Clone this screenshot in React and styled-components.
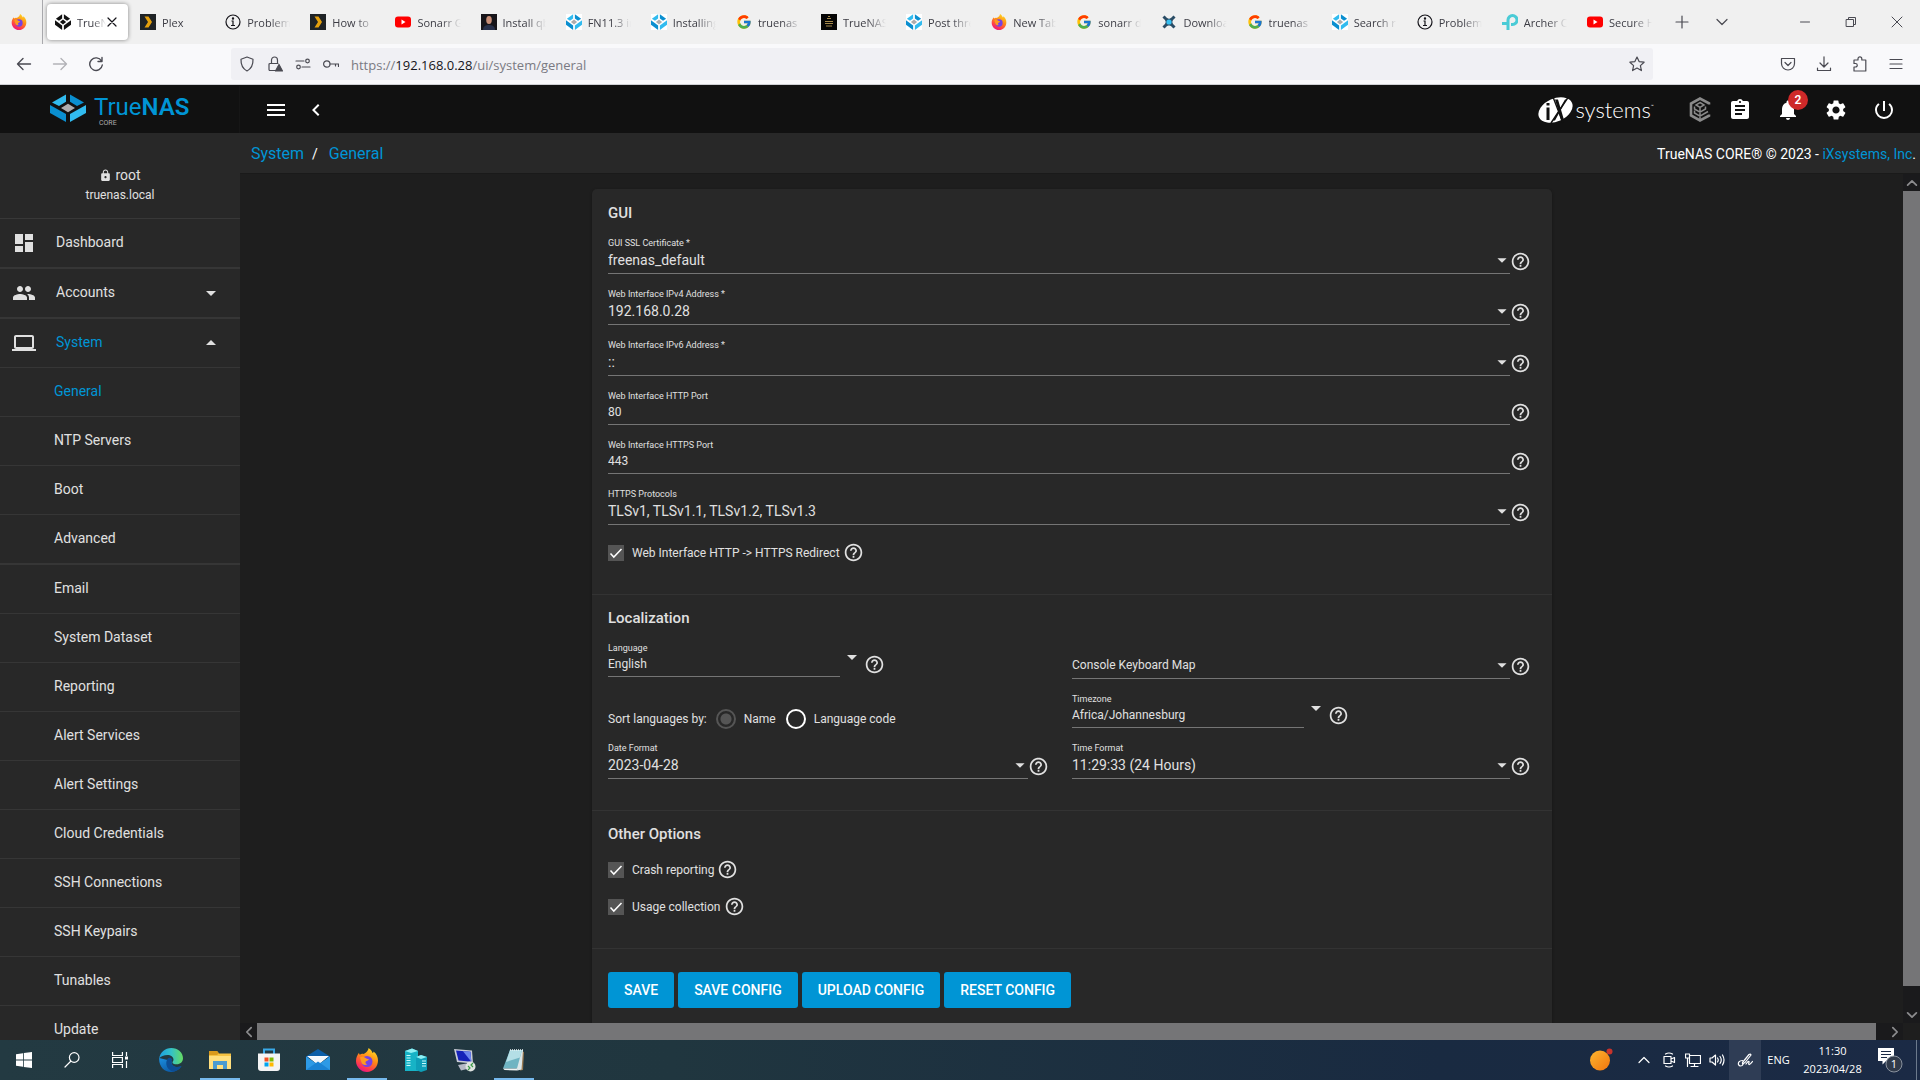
import { useState } from 'react';
import styled, { createGlobalStyle } from 'styled-components';
import {
  MdArrowDropDown,
  MdArrowDropUp,
  MdAssignment,
  MdChevronLeft,
  MdDashboard,
  MdHelpOutline,
  MdLaptop,
  MdLock,
  MdMenu,
  MdNotifications,
  MdPeople,
  MdPowerSettingsNew,
  MdSettings,
} from 'react-icons/md';
import { FcGoogle } from 'react-icons/fc';

const GlobalStyle = createGlobalStyle`
  * {
    box-sizing: border-box;
  }

  body {
    margin: 0;
    background: #1e1e1e;
    font-family: Roboto, "Liberation Sans", sans-serif;
    overflow: hidden;
  }

  button, input, select {
    font-family: inherit;
    margin: 0;
  }
`

const Desktop = styled.div`
  display: flex;
  flex-direction: column;
  height: 100vh;
`

/* ---------- browser ---------- */

const TabStrip = styled.div`
  display: flex;
  flex: none;
  height: 44px;
  background: #f0f0f0;
  font-family: "Open Sans", "Noto Sans", sans-serif;
`

const PinnedTab = styled.button`
  display: flex;
  align-items: center;
  justify-content: center;
  width: 43px;
  padding: 0 4px 0 0;
  border: 0;
  border-right: 1px solid #a9a9ad;
  background: none;
`

const TabList = styled.div`
  display: flex;
  flex: 0 1 1619px;
  min-width: 0;
  padding: 4px 0 4px 2px;
`

const Tab = styled.div`
  display: flex;
  flex: 1 1 0;
  min-width: 0;
  align-items: center;
  gap: 6px;
  margin: 0 2px;
  padding: 0 8px;
  border-radius: 4px;
  background: ${(props) => (props.$active ? '#fff' : 'none')};
  box-shadow: ${(props) => (props.$active ? '0 0 4px rgba(0, 0, 0, 0.45)' : 'none')};

  > svg {
    flex: none;
  }
`

const TabTitle = styled.span`
  flex: 1;
  min-width: 0;
  padding-top: 2px;
  overflow: hidden;
  white-space: nowrap;
  font-size: 11px;
  line-height: 16px;
  color: #3c3c44;
  mask-image: linear-gradient(to right, #000 55%, transparent 100%);
`

const TabClose = styled.button`
  display: flex;
  flex: none;
  padding: 0;
  margin-left: -8px;
  border: 0;
  background: none;
`

const StripButton = styled.button`
  display: flex;
  align-items: center;
  justify-content: center;
  width: ${(props) => props.$width || 40}px;
  padding: 0;
  border: 0;
  background: none;
`

const WindowControls = styled.div`
  display: flex;
  margin-left: auto;
`

const NavBar = styled.div`
  display: flex;
  flex: none;
  align-items: center;
  height: 41px;
  padding: 0 6px;
  background: #f9f9fb;
  border-bottom: 1px solid #cfd0d4;
`

const NavButton = styled.button`
  display: flex;
  align-items: center;
  justify-content: center;
  width: 36px;
  height: 32px;
  padding: 0;
  border: 0;
  background: none;
  opacity: ${(props) => (props.disabled ? 0.4 : 1)};
`

const UrlBar = styled.label`
  display: flex;
  flex: 1;
  align-items: center;
  gap: 12px;
  height: 32px;
  margin-left: 117px;
  margin-right: 117px;
  padding: 0 8px;
  border-radius: 3px;
  background: #f0f0f4;
`

const UrlText = styled.a`
  flex: 1;
  padding-top: 2px;
  font-family: "Open Sans", "Noto Sans", sans-serif;
  font-size: 13px;
  line-height: 20px;
  color: #7a7a82;
  text-decoration: none;

  b {
    font-weight: 400;
    color: #15141a;
  }
`

/* ---------- TrueNAS shell ---------- */

const AppShell = styled.div`
  display: flex;
  flex-direction: column;
  flex: 1;
  min-height: 0;
  color: #e0e0e0;
`

const Header = styled.header`
  display: flex;
  flex: none;
  align-items: center;
  height: 48px;
  padding-top: 1px;
  background: #111;
`

const Brand = styled.a`
  display: flex;
  width: 240px;
  height: 47px;
  padding: 8px 0 0 50px;
  gap: 8px;
  border-right: 1px solid #161616;
  text-decoration: none;
`

const BrandName = styled.span`
  display: flex;
  flex-direction: column;
  font-size: 24px;
  line-height: 26px;
  color: #0095d5;

  b {
    font-weight: 600;
  }
`

const BrandEdition = styled.span`
  padding-left: 5px;
  font-size: 7px;
  line-height: 6px;
  color: #aeadae;
`

const HeaderButton = styled.button`
  position: relative;
  display: flex;
  align-items: center;
  justify-content: center;
  width: ${(props) => props.$width || 48}px;
  height: 48px;
  padding: 0;
  border: 0;
  background: none;
  color: #fff;
  font-size: 24px;
`

const HeaderLeft = styled.div`
  display: flex;
  margin-left: 12px;
`

const HeaderRight = styled.div`
  display: flex;
  align-items: center;
  margin-left: auto;
  padding-right: 4px;
`

const Badge = styled.span`
  position: absolute;
  top: 4px;
  right: 12px;
  width: 20px;
  height: 20px;
  border-radius: 50%;
  background: #ce2929;
  font-size: 12px;
  font-weight: 600;
  line-height: 20px;
  text-align: center;
`

const IxLogo = styled.a`
  display: flex;
  align-items: center;
  margin-right: 22px;
  color: #fff;
  text-decoration: none;
`

const IxName = styled.span`
  font-family: Lato, sans-serif;
  font-size: 22px;
  font-weight: 300;
  line-height: 28px;
  padding-left: 2px;
`

const IxMark = styled.sup`
  align-self: flex-start;
  font-size: 5px;
  line-height: 20px;
`

const Body = styled.div`
  display: flex;
  flex: 1;
  min-height: 0;
`

const Sidebar = styled.nav`
  flex: none;
  width: 240px;
  overflow: hidden;
  background: #282828;
`

const Profile = styled.div`
  display: flex;
  flex-direction: column;
  align-items: center;
  height: 86px;
  padding-top: 32px;
  border-bottom: 1px solid #383838;
`

const ProfileName = styled.span`
  display: flex;
  align-items: center;
  gap: 3px;
  font-size: 14px;
  line-height: 20px;

  svg {
    font-size: 13px;
  }
`

const ProfileHost = styled.span`
  font-size: 12px;
  line-height: 20px;
`

const MenuList = styled.ul`
  margin: 0;
  padding: 0;
  list-style: none;
`

const MenuRow = styled.li`
  border-bottom: ${(props) => (props.$thick ? 2 : 1)}px solid #363636;
`

const MenuLink = styled.a`
  display: flex;
  align-items: center;
  height: 48px;
  padding: ${(props) => (props.$sub ? '0 16px 0 54px' : '0 17px 0 12px')};
  font-size: 14px;
  line-height: 20px;
  color: ${(props) => (props.$active ? '#0095d5' : '#e0e0e0')};
  text-decoration: none;

  svg {
    flex: none;
    font-size: 24px;
    color: #e0e0e0;
  }
`

const MenuText = styled.span`
  flex: 1;
  padding-left: ${(props) => (props.$sub ? 0 : 20)}px;
  padding-bottom: 2px;
`

const Main = styled.div`
  display: flex;
  flex-direction: column;
  flex: 1;
  min-width: 0;
`

const Breadcrumb = styled.div`
  display: flex;
  flex: none;
  align-items: center;
  height: 40px;
  padding: 2px 4px 0 11px;
  background: #282828;
  font-size: 16px;
  line-height: 24px;
  color: #fff;

  a {
    color: #0095d5;
    text-decoration: none;
  }
`

const Slash = styled.span`
  padding: 0 11px 0 8px;
  font-size: 14px;
`

const Copyright = styled.span`
  margin-left: auto;
  font-size: 14px;
`

const ScrollArea = styled.div`
  display: grid;
  flex: 1;
  min-height: 0;
  grid-template-columns: 1fr 17px;
  grid-template-rows: 1fr 17px;
  border-top: 1px solid #1a1a1a;
`

const Page = styled.main`
  min-width: 0;
  min-height: 0;
  overflow: hidden;
  padding: 15px 16px 0 17px;
`

const ScrollBar = styled.div`
  display: flex;
  flex-direction: ${(props) => (props.$vertical ? 'column' : 'row')};
  background: #1a1a1c;
`

const ScrollArrow = styled.button`
  display: flex;
  flex: none;
  align-items: center;
  justify-content: center;
  width: 17px;
  height: 17px;
  padding: 0;
  border: 0;
  background: none;
`

const ScrollTrack = styled.div`
  display: flex;
  flex: 1;
  flex-direction: inherit;
`

const ScrollThumb = styled.div`
  flex: 0 0 ${(props) => props.$size}%;
  background: #757577;
`

const Card = styled.form`
  max-width: 960px;
  margin: 0 auto;
  padding-top: 1px;
  border-radius: 5px;
  background: #282828;
  box-shadow: 0 1px 3px rgba(0, 0, 0, 0.3);
`

const Section = styled.section`
  padding: 15px 16px 29px;
  border-bottom: 1px solid #333;
`

const SectionTitle = styled.h3`
  margin: 0;
  font-size: 15px;
  font-weight: 500;
  line-height: 16px;
`

const FieldList = styled.div`
  display: flex;
  flex-direction: column;
  gap: 14px;
  padding-right: ${(props) => props.$inset || 5}px;
`

const Fields = styled(FieldList)`
  margin-top: 16px;
`

const LocalizationGrid = styled.div`
  display: grid;
  grid-template-columns: 1fr 1fr;
  margin: 16px 0 2px;
`

const FieldRow = styled.div`
  display: flex;
  align-items: flex-end;
`

const FieldBox = styled.div`
  display: flex;
  flex-direction: column;
  flex: ${(props) => (props.$fixed ? '0 0 232px' : '1')};
  min-width: 0;
  border-bottom: 1px solid #757575;
`

const FieldLabel = styled.label`
  height: 12px;
  font-size: 9px;
  line-height: 12px;
`

const SelectBox = styled.div`
  display: grid;
  align-items: center;
  height: 24px;

  select, svg {
    grid-area: 1 / 1;
  }

  svg {
    justify-self: end;
    align-self: start;
    pointer-events: none;
    font-size: 22px;
    margin-right: -3px;
  }
`

const Select = styled.select`
  width: 100%;
  height: 24px;
  padding: 0 0 2px;
  border: 0;
  background: none;
  appearance: none;
  color: #e0e0e0;
  font-size: ${(props) => (props.$small ? 12 : 14)}px;
  line-height: 20px;
  outline: none;
`

const Input = styled.input`
  width: 100%;
  height: 22px;
  padding: 0 0 2px;
  border: 0;
  background: none;
  color: #e0e0e0;
  font-size: 12px;
  line-height: 18px;
  outline: none;
`

const HelpButton = styled.button`
  display: flex;
  flex: none;
  padding: 0 0 2px;
  border: 0;
  background: none;
  color: #e0e0e0;
  font-size: 21px;
`

const DropButton = styled(HelpButton)`
  align-self: flex-start;
  padding-top: 3px;
  font-size: 24px;
`

const CheckList = styled.div`
  display: flex;
  flex-direction: column;
  gap: 13px;
  margin-top: 16px;
`

const CheckRow = styled.div`
  display: flex;
  align-items: center;
  height: 24px;
`

const CheckLabel = styled.label`
  display: flex;
  align-items: center;
  gap: 8px;
  padding-right: 3px;
  font-size: 12px;
  line-height: 18px;
`

const CheckBox = styled.input`
  width: 16px;
  height: 16px;
  appearance: none;
  background-color: #555;

  &:checked {
    background-image: url("data:image/svg+xml,%3Csvg xmlns='http://www.w3.org/2000/svg' viewBox='0 0 16 16'%3E%3Cpath d='M2.5 8.5l3.3 3.6L13.5 4' fill='none' stroke='%23fff' stroke-width='1.5'/%3E%3C/svg%3E");
  }
`

const SortRow = styled.div`
  display: flex;
  align-items: center;
  height: 28px;
  margin-top: 14px;
  margin-bottom: -5px;
  font-size: 12px;
  line-height: 18px;
`

const SortCaption = styled.span`
  padding-right: 9px;
`

const RadioLabel = styled.label`
  display: flex;
  align-items: center;
  gap: 8px;
  padding-right: 10px;
`

const Radio = styled.input`
  width: 20px;
  height: 20px;
  border: 2px solid #fff;
  border-radius: 50%;
  appearance: none;

  &:checked {
    border-color: #555;
    background: radial-gradient(circle, #555 5px, transparent 6px);
  }
`

const Actions = styled.div`
  display: flex;
  gap: 4px;
  padding: 23px 16px 24px;
`

const ActionButton = styled.button`
  height: 36px;
  padding: 0 16px;
  border: 0;
  border-radius: 3px;
  background: #0095d5;
  color: #fff;
  font-size: 14px;
  font-weight: 500;
  line-height: 36px;
  text-transform: uppercase;
`

/* ---------- taskbar ---------- */

const TaskBar = styled.footer`
  display: flex;
  flex: none;
  height: 40px;
  background: linear-gradient(to right, #233a42, #20363f 35%, #192a41 75%, #1b2a45);
  color: #fff;
  font-family: "Open Sans", "Noto Sans", sans-serif;
`

const TaskGroup = styled.div`
  display: flex;
  padding-right: 2px;
`

const TaskButton = styled.button`
  display: flex;
  align-items: center;
  justify-content: center;
  width: ${(props) => props.$width || 49}px;
  padding: 0;
  border: 0;
  background: ${(props) => (props.$lit ? '#2f3d55' : 'none')};
  color: #fff;
`

const OpenTask = styled(TaskButton)`
  background: linear-gradient(to right, #76b9ed 40px, transparent 0) 5px 38px / 40px 2px no-repeat;
`

const Tray = styled.div`
  display: flex;
  margin-left: auto;
  padding-right: 3px;
`

const TrayText = styled.span`
  display: flex;
  flex-direction: column;
  align-items: center;
  justify-content: center;
  width: ${(props) => props.$width}px;
  font-size: 11px;
  line-height: 18px;
  white-space: nowrap;
`

const ShowDesktop = styled.span`
  width: 1px;
  margin-left: 6px;
  background: #6c7a8c;
`

/* ---------- drawings ---------- */

const TrueNasMark = ({ width = 36, height = 28, mono, boxed }) => {
  const light = mono ? '#111' : '#31bbef';
  const dark = mono ? '#111' : '#0a8fd0';

  return (
    <svg width={width} height={height} viewBox="0 0 36 28" preserveAspectRatio={mono || boxed ? 'none' : undefined}>
      {boxed && <rect width="36" height="28" fill="#fff" />}
      <path d="M2 8.5L16 .5v7.3L9 12z" fill={light} />
      <path d="M20 .5l14 8L27 12l-7-4.2z" fill={dark} />
      <path d="M0 11l16 9v8L0 19z" fill={dark} />
      <path d="M36 11l-16 9v8l16-9z" fill={light} />
      <path d="M18 9.8l7 4.2-7 4.2-7-4.2z" fill={mono ? '#111' : '#aeadae'} />
    </svg>
  )
}

const FirefoxIcon = ({ size = 16 }) => (
  <svg width={size} height={size} viewBox="0 0 24 24">
    <defs>
      <linearGradient id="ff-body" x1="0.8" y1="0" x2="0.3" y2="1">
        <stop offset="0" stopColor="#ffe226" />
        <stop offset="0.45" stopColor="#ff8a16" />
        <stop offset="0.8" stopColor="#ff3750" />
        <stop offset="1" stopColor="#e31587" />
      </linearGradient>
    </defs>
    <path
      d="M13.5 0c2.6 1.6 3.6 3.5 4 5 .9-.2 1-1 1-1.6C21.5 5.6 23 9 23 12.6 23 19 18 24 12 24S1 19 1 13c0-3.400 1.300-6 3-8.200.1 1 .4 1.700.8 2C6 5.600 7.500 5.500 8.800 6 10.600 4.800 13.300 3.200 13.500 0z"
      fill="url(#ff-body)"
    />
    <circle cx="12" cy="13.500" r="5.500" fill="#7542e5" />
    <path d="M5 9.500c2-1.500 4.500-.5 6 .7 1 .8 2.600.6 2.800 1.200-.5 1.400-2.600 1.200-3.300 2.700-.3 1 .5 2 1.800 2.200-2.400 1.500-5.500.2-6-2.400z" fill="#ff9a1f" />
  </svg>
)

const PlexIcon = () => (
  <svg width="16" height="16" viewBox="0 0 16 16">
    <rect width="16" height="16" fill="#1f2326" />
    <path d="M4.500 2.500h4L12 8l-3.500 5.500h-4L8 8z" fill="#e5a00d" />
  </svg>
)

const InfoIcon = () => (
  <svg width="16" height="16" viewBox="0 0 16 16" fill="none" stroke="#15141a" strokeWidth="1.200">
    <circle cx="8" cy="8" r="7" />
    <path d="M6.500 7H8v4.500M6 11.500h4" />
    <circle cx="8" cy="4.500" r=".6" fill="#15141a" />
  </svg>
)

const YoutubeIcon = () => (
  <svg width="16" height="16" viewBox="0 0 16 16">
    <rect y="2.500" width="16" height="11" rx="3" fill="#f00" />
    <path d="M6.500 5.500L10.500 8l-4 2.500z" fill="#fff" />
  </svg>
)

const PortraitIcon = () => (
  <svg width="16" height="16" viewBox="0 0 16 16">
    <rect width="16" height="16" fill="#17151a" />
    <ellipse cx="8" cy="6" rx="2.800" ry="4" fill="#c98f78" />
    <path d="M2 16c0-4 3-5 6-5s6 1 6 5z" fill="#28304a" />
  </svg>
)

const DigiIcon = () => (
  <svg width="16" height="16" viewBox="0 0 16 16">
    <rect width="16" height="16" fill="#050505" />
    <path d="M7 2.500h2M6 4.500h4M4 7.500h8M4 9.500h8M5 12h6" stroke="#a68a4c" strokeWidth="1" />
  </svg>
)

const SonarrIcon = () => (
  <svg width="16" height="16" viewBox="0 0 16 16">
    <path d="M2.500 2.500l11 11M13.500 2.500l-11 11" stroke="#2b4d66" strokeWidth="3" />
    <path d="M3.500 3.500c3 1.500 6 1.500 9 0-1.500 3-1.500 6 0 9-3-1.500-6-1.500-9 0 1.500-3 1.500-6 0-9z" fill="#2b4d66" />
    <circle cx="8" cy="8" r="2.600" fill="#36c0f2" />
  </svg>
)

const TpLinkIcon = () => (
  <svg width="16" height="16" viewBox="0 0 16 16" fill="none" stroke="#4acbd6" strokeWidth="3">
    <path d="M0 9.500h4.500M6 16V6a4.500 4.500 0 1 1 4.500 4.500H9" />
  </svg>
)

/* thin outline glyphs of the browser and tray, all on a 16px grid */
const Outline = ({ d, size = 16, color = '#4a4a52', width = 1.2, children }) => (
  <svg
    width={size}
    height={size}
    viewBox="0 0 16 16"
    fill="none"
    stroke={color}
    strokeWidth={width}
    strokeLinecap="round"
    strokeLinejoin="round"
  >
    <path d={d} />
    {children}
  </svg>
)

const TrueCommandIcon = () => (
  <svg width="22" height="25" viewBox="0 0 22 25" fill="none" stroke="#8a8a8a">
    <path d="M20 7.500V6.300L11 1.500 2 6.500v12l9 5 9-4.800v-1.200" strokeWidth="2.600" />
    <path d="M11 5.500l4 2.400-4 2.400-4-2.400zM11 10v12M5.500 9.500v2.500l5.500 3.200 5.500-3.200V9.500M5.500 13.500V16l5.500 3.200 8-4.700" strokeWidth="1.500" />
  </svg>
)

const IxOval = () => (
  <svg width="35" height="28" viewBox="0 0 35 28">
    <ellipse cx="17.500" cy="14" rx="18" ry="11.500" transform="rotate(-24 17.500 14)" fill="#fff" />
    <path d="M15 1l10 26M31 0L13 27" stroke="#111" strokeWidth="1.400" />
    <path d="M17 3.500h3l6 20.500h-3zM27 3.500h1.500L17 24.500h-2z" fill="#111" />
    <path d="M8.500 11.500h3V24h-3zM8.500 7h3v2.500h-3z" fill="#111" />
  </svg>
)

const StartIcon = () => (
  <svg width="16" height="16" viewBox="0 0 16 16" fill="#fff">
    <path d="M0 2.200L7 1.200v6.400H0zM7.800 1.100L16 0v7.600H7.800zM0 8.400h7v6.400l-7-1zM7.800 8.400H16V16l-8.200-1.100z" />
  </svg>
)

const TaskViewIcon = () => (
  <svg width="16" height="16" viewBox="0 0 16 16" fill="none" stroke="#fff" strokeWidth="1.200">
    <path d="M.6 0v3.500h9.800V0M.6 16v-3.500h9.800V16M.6 5.500h9.800v5H.6zM14.500 0v4M14.500 9v7" />
    <rect x="13" y="4.500" width="3" height="3" fill="#fff" stroke="none" />
  </svg>
)

const EdgeIcon = () => (
  <svg width="24" height="24" viewBox="0 0 24 24">
    <defs>
      <linearGradient id="edge-top" x1="0" y1="0.5" x2="1" y2="0.5">
        <stop offset="0" stopColor="#1c9fe0" />
        <stop offset="0.5" stopColor="#33c1c9" />
        <stop offset="1" stopColor="#66dc62" />
      </linearGradient>
      <linearGradient id="edge-low" x1="0" y1="0" x2="0.6" y2="1">
        <stop offset="0" stopColor="#1b8fe0" />
        <stop offset="1" stopColor="#0c59a4" />
      </linearGradient>
    </defs>
    <path d="M.2 10C-.4 18 5 24 12 24c4.500 0 8.500-2.500 10.500-6-2 1-4.500 1.300-6.500.7-2.500-.8-4-3-3.500-5.700z" fill="url(#edge-low)" />
    <path d="M8.500 11c-2 3-1.500 7.500 1.500 10.300 1.200 1.200 2.500 2 4 2.500 3.500-.6 6.700-2.800 8.500-5.800-2 1-4.500 1.300-6.500.7-3-1-4.500-4-2.800-7.200-1-2.500-3.700-2-4.700-.5z" fill="#0d4d94" />
    <path d="M.2 10.500C1 4.500 6 0 12.300 0 19 0 24 4.800 24 10.300c0 3.700-2.800 6-6.300 6-2.700 0-4.200-.8-4.200-1.800 0-.8 1-1.200 1-2.900 0-2.600-2.800-4.600-6-4.600C5 7 1.500 8.500.2 10.500z" fill="url(#edge-top)" />
  </svg>
)

const ExplorerIcon = () => (
  <svg width="24" height="24" viewBox="0 0 24 24">
    <path d="M1 3h8l2 2.500h12V21H1z" fill="#f5c242" />
    <path d="M1 3h8l2 2.500L9 7H1z" fill="#d99a1c" />
    <path d="M1 8h22v13H1z" fill="#ffdf7e" />
    <path d="M5 13h14v8h-4v-4H9v4H5z" fill="#4a9bd1" />
  </svg>
)

const StoreIcon = () => (
  <svg width="24" height="24" viewBox="0 0 24 24">
    <path d="M7 6V1.500h10V6" fill="none" stroke="#39a9e8" strokeWidth="2" />
    <path d="M1 5.500h22V20c0 2-1 3-3 3H4c-2 0-3-1-3-3z" fill="#f4f4f4" />
    <path d="M7.500 9.500h4v4h-4z" fill="#f25022" />
    <path d="M12.500 9.500h4v4h-4z" fill="#7fba00" />
    <path d="M7.500 14.500h4v4h-4z" fill="#00a4ef" />
    <path d="M12.500 14.500h4v4h-4z" fill="#ffb900" />
  </svg>
)

const MailIcon = () => (
  <svg width="24" height="24" viewBox="0 0 24 24">
    <path d="M0 8.500L12 1l12 7.500V10H0z" fill="#0b5ea8" />
    <path d="M1 8h22L12 17z" fill="#fff" />
    <path d="M0 8.500l12 8 12-8V22H0z" fill="#2d9ae6" />
    <path d="M2 8.500h20L12 15.500z" fill="#f2f8fd" />
    <path d="M0 22l12-8.500L24 22z" fill="#1a83d4" />
  </svg>
)

const ServersIcon = () => (
  <svg width="24" height="24" viewBox="0 0 24 24">
    <path d="M1 3l7-2.500L14 3v20H1z" fill="#17b3c6" />
    <path d="M1 3l7-2.500L14 3 7 5z" fill="#8ff0f4" />
    <path d="M12 9l5-2 6 2v13l-6 2-5-2z" fill="#0e9fb8" />
    <path d="M12 9l5-2 6 2-6 2z" fill="#8ff0f4" />
    <path d="M2.500 7.500h4M2.500 10h4M2.500 12.500h4M2.500 15h4M2.500 17.500h4M18 13h4M18 15.500h4M18 18h4" stroke="#c8fbfd" strokeWidth="1.200" />
  </svg>
)

const RemoteIcon = () => (
  <svg width="24" height="24" viewBox="0 0 24 24">
    <path d="M1 1l18 1.500 1 13L4 14z" fill="#c9ccd6" />
    <path d="M3 2.500l14.500 1.300.8 10L5.500 12.500z" fill="#1622b8" />
    <path d="M10 3.200l7.500.6.800 10z" fill="#6d86ee" />
    <path d="M5 17l8-1.500 3 5-8 2z" fill="#b5b9c6" />
    <circle cx="17.500" cy="18.500" r="5" fill="#dfe3e1" />
    <path d="M15 18l2 2-2 2M20 15l-2 2 2 2" fill="none" stroke="#3a9b46" strokeWidth="1.200" />
  </svg>
)

const NotepadIcon = () => (
  <svg width="24" height="24" viewBox="0 0 24 24">
    <path d="M19 3l3 1-1 18-3 .5z" fill="#9a7b52" />
    <path d="M8 2h13l-1.500 19.500-4 1z" fill="#dbe6e8" />
    <path d="M8 2h12l-5 18.500H1z" fill="#6fb4c2" />
    <path d="M8 2h12l-2 7.500L4 14z" fill="#b4dfe6" />
    <path d="M1 20.500h14l.5 2-13-.5z" fill="#eef3f3" />
    <path d="M8 2h13" stroke="#e9f3f4" strokeWidth="1.500" strokeDasharray="1 1" />
  </svg>
)

const WeatherIcon = () => (
  <svg width="24" height="24" viewBox="0 0 24 24">
    <defs>
      <linearGradient id="sun" x1="0" y1="0" x2="1" y2="1">
        <stop offset="0" stopColor="#fdb62f" />
        <stop offset="1" stopColor="#f2750e" />
      </linearGradient>
    </defs>
    <circle cx="11" cy="12.500" r="10" fill="url(#sun)" />
    <circle cx="20.500" cy="3.500" r="3" fill="#c8332b" />
  </svg>
)

const NoticeIcon = () => (
  <svg width="26" height="26" viewBox="0 0 26 26">
    <path d="M1 1h16v13H9l-3.500 3.500V14H1z" fill="#fff" />
    <path d="M4 4.500h10M4 7.500h10M4 10.500h6" stroke="#1b2a45" strokeWidth="1.200" />
    <circle cx="17" cy="17" r="8" fill="#303a4a" stroke="#8a929e" />
    <text x="17" y="21" fill="#fff" fontSize="11" fontFamily="Open Sans" textAnchor="middle">1</text>
  </svg>
)

/* ---------- data ---------- */

const nasFavicon = <TrueNasMark width={16} height={16} boxed />

const tabs = [
  { icon: <PlexIcon />, title: 'Plex' },
  { icon: <InfoIcon />, title: 'Problem' },
  { icon: <PlexIcon />, title: 'How to' },
  { icon: <YoutubeIcon />, title: 'Sonarr G' },
  { icon: <PortraitIcon />, title: 'Install qb' },
  { icon: nasFavicon, title: 'FN11.3 in' },
  { icon: nasFavicon, title: 'Installing' },
  { icon: <FcGoogle />, title: 'truenas ' },
  { icon: <DigiIcon />, title: 'TrueNAS' },
  { icon: nasFavicon, title: 'Post thre' },
  { icon: <FirefoxIcon />, title: 'New Tab' },
  { icon: <FcGoogle />, title: 'sonarr d' },
  { icon: <SonarrIcon />, title: 'Downloa' },
  { icon: <FcGoogle />, title: 'truenas ' },
  { icon: nasFavicon, title: 'Search r' },
  { icon: <InfoIcon />, title: 'Problem' },
  { icon: <TpLinkIcon />, title: 'Archer C' },
  { icon: <YoutubeIcon />, title: 'Secure H' },
]

const systemItems = [
  'General',
  'NTP Servers',
  'Boot',
  'Advanced',
  'Email',
  'System Dataset',
  'Reporting',
  'Alert Services',
  'Alert Settings',
  'Cloud Credentials',
  'SSH Connections',
  'SSH Keypairs',
  'Tunables',
  'Update',
]

const tasks = [
  { name: 'Microsoft Edge', icon: <EdgeIcon /> },
  { name: 'File Explorer', icon: <ExplorerIcon />, open: true },
  { name: 'Microsoft Store', icon: <StoreIcon /> },
  { name: 'Mail', icon: <MailIcon /> },
  { name: 'Firefox', icon: <FirefoxIcon size={24} />, open: true },
  { name: 'Servers', icon: <ServersIcon /> },
  { name: 'Remote Desktop', icon: <RemoteIcon /> },
  { name: 'Notepad', icon: <NotepadIcon />, open: true },
]

/* ---------- parts ---------- */

const Help = () => (
  <HelpButton type="button" aria-label="Help">
    <MdHelpOutline />
  </HelpButton>
)

const SelectField = ({ id, label, value, bare }) => (
  <FieldRow>
    <FieldBox>
      <FieldLabel htmlFor={id}>{bare ? '' : label}</FieldLabel>
      <SelectBox>
        <Select id={id} aria-label={label} $small={bare}>
          <option>{value}</option>
        </Select>
        <MdArrowDropDown />
      </SelectBox>
    </FieldBox>
    <Help />
  </FieldRow>
)

const TextField = ({ id, label, value }) => (
  <FieldRow>
    <FieldBox>
      <FieldLabel htmlFor={id}>{label}</FieldLabel>
      <Input id={id} defaultValue={value} />
    </FieldBox>
    <Help />
  </FieldRow>
)

const ComboField = ({ id, label, value }) => (
  <FieldRow>
    <FieldBox $fixed>
      <FieldLabel htmlFor={id}>{label}</FieldLabel>
      <Input id={id} defaultValue={value} />
    </FieldBox>
    <DropButton type="button" aria-label={`Open ${label}`}>
      <MdArrowDropDown />
    </DropButton>
    <Help />
  </FieldRow>
)

const CheckField = ({ id, label }) => (
  <CheckRow>
    <CheckLabel htmlFor={id}>
      <CheckBox id={id} type="checkbox" defaultChecked />
      {label}
    </CheckLabel>
    <Help />
  </CheckRow>
)

const Browser = () => (
  <>
    <TabStrip>
      <PinnedTab aria-label="Firefox View"><FirefoxIcon /></PinnedTab>
      <TabList>
        <Tab $active>
          <TrueNasMark width={16} height={16} mono />
          <TabTitle>TrueNAS</TabTitle>
          <TabClose aria-label="Close tab">
            <Outline d="M4 4l8 8M12 4l-8 8" color="#15141a" />
          </TabClose>
        </Tab>
        {tabs.map((tab, index) => (
          <Tab key={index}>
            {tab.icon}
            <TabTitle>{tab.title}</TabTitle>
          </Tab>
        ))}
      </TabList>
      <StripButton aria-label="New tab"><Outline d="M8 2v12M2 8h12" /></StripButton>
      <StripButton aria-label="List all tabs"><Outline d="M3 5.500l5 5 5-5" /></StripButton>
      <WindowControls>
        <StripButton $width={46} aria-label="Minimize"><Outline d="M3.500 8h9" width={1} /></StripButton>
        <StripButton $width={46} aria-label="Restore">
          <Outline d="M3.500 5.500h7v7h-7zM5.500 5.500v-2h7v7h-2" width={1} />
        </StripButton>
        <StripButton $width={46} aria-label="Close"><Outline d="M3 3l10 10M13 3L3 13" width={1} /></StripButton>
      </WindowControls>
    </TabStrip>
    <NavBar>
      <NavButton aria-label="Back"><Outline d="M14.500 8h-13M7 2.500L1.500 8 7 13.500" width={1.4} /></NavButton>
      <NavButton aria-label="Forward" disabled><Outline d="M1.500 8h13M9 2.500L14.500 8 9 13.500" width={1.4} /></NavButton>
      <NavButton aria-label="Reload">
        <Outline d="M13.500 5A6.300 6.300 0 1 0 14.300 9M14 1.500V5.500H10" width={1.4} />
      </NavButton>
      <UrlBar>
        <Outline d="M8 1l6 2.200c.2 5-1.500 9.300-6 11.800C3.500 12.500 1.800 8.200 2 3.200z" />
        <Outline d="M9 14.500H3a1 1 0 0 1-1-1v-5a1 1 0 0 1 1-1h8M4.500 7.500V4a3 3 0 0 1 6 0v3.500">
          <path d="M12 8.500l3.500 6.500h-7z" fill="#4a4a52" />
        </Outline>
        <Outline d="M1 5h8M7 11h8">
          <circle cx="12.500" cy="5" r="1.800" />
          <circle cx="3.500" cy="11" r="1.800" />
        </Outline>
        <Outline d="M7 8h8.500v2.500M12.500 8v2">
          <circle cx="3.800" cy="8" r="3.200" />
        </Outline>
        <UrlText href="#url">https://<b>192.168.0.28</b>/ui/system/general</UrlText>
        <Outline d="M8 1l2.100 4.600 5 .6-3.700 3.400 1 5L8 12.100l-4.400 2.500 1-5L.9 6.200l5-.6z" />
      </UrlBar>
      <NavButton aria-label="Save to Pocket">
        <Outline d="M1.500 2.500h13v5a6.500 6.500 0 0 1-13 0zM5 6.500l3 3 3-3" />
      </NavButton>
      <NavButton aria-label="Downloads"><Outline d="M8 .8v9.700M4 7l4 4 4-4M1.500 12v2.500h13V12" /></NavButton>
      <NavButton aria-label="Extensions">
        <Outline d="M2 15V11h1.500a1.700 1.700 0 0 0 0-3.500H2V4h4V2.700a1.900 1.900 0 0 1 3.800 0V4h4v11z" />
      </NavButton>
      <NavButton aria-label="Menu"><Outline d="M2 3.500h12M2 8h12M2 12.500h12" /></NavButton>
    </NavBar>
  </>
)

const TopBar = () => (
  <Header>
    <Brand href="#home">
      <TrueNasMark />
      <BrandName>
        <span>True<b>NAS</b></span>
        <BrandEdition>CORE</BrandEdition>
      </BrandName>
    </Brand>
    <HeaderLeft>
      <HeaderButton aria-label="Toggle menu"><MdMenu /></HeaderButton>
      <HeaderButton $width={32} aria-label="Collapse menu"><MdChevronLeft /></HeaderButton>
    </HeaderLeft>
    <HeaderRight>
      <IxLogo href="#ixsystems">
        <IxOval />
        <IxName>systems</IxName>
        <IxMark>™</IxMark>
      </IxLogo>
      <HeaderButton $width={48} aria-label="TrueCommand"><TrueCommandIcon /></HeaderButton>
      <HeaderButton $width={32} aria-label="Tasks"><MdAssignment /></HeaderButton>
      <HeaderButton $width={64} aria-label="Alerts">
        <MdNotifications />
        <Badge>2</Badge>
      </HeaderButton>
      <HeaderButton $width={32} aria-label="Settings"><MdSettings /></HeaderButton>
      <HeaderButton $width={64} aria-label="Power"><MdPowerSettingsNew /></HeaderButton>
    </HeaderRight>
  </Header>
)

const SideMenu = () => (
  <Sidebar>
    <Profile>
      <ProfileName><MdLock />root</ProfileName>
      <ProfileHost>truenas.local</ProfileHost>
    </Profile>
    <MenuList>
      <MenuRow $thick>
        <MenuLink href="#dashboard"><MdDashboard /><MenuText>Dashboard</MenuText></MenuLink>
      </MenuRow>
      <MenuRow $thick>
        <MenuLink href="#accounts"><MdPeople /><MenuText>Accounts</MenuText><MdArrowDropDown /></MenuLink>
      </MenuRow>
      <MenuRow>
        <MenuLink href="#system" $active><MdLaptop /><MenuText>System</MenuText><MdArrowDropUp /></MenuLink>
      </MenuRow>
      {systemItems.map((item) => (
        <MenuRow key={item} $thick={item === 'Advanced'}>
          <MenuLink href="#system" $sub $active={item === 'General'}>
            <MenuText $sub>{item}</MenuText>
          </MenuLink>
        </MenuRow>
      ))}
    </MenuList>
  </Sidebar>
)

const GeneralForm = () => {
  const [sort, setSort] = useState('name');

  return (
    <Card onSubmit={(e) => e.preventDefault()}>
      <Section>
        <SectionTitle>GUI</SectionTitle>
        <Fields>
          <SelectField id="cert" label="GUI SSL Certificate *" value="freenas_default" />
          <SelectField id="ipv4" label="Web Interface IPv4 Address *" value="192.168.0.28" />
          <SelectField id="ipv6" label="Web Interface IPv6 Address *" value="::" />
          <TextField id="http" label="Web Interface HTTP Port" value="80" />
          <TextField id="https" label="Web Interface HTTPS Port" value="443" />
          <SelectField id="tls" label="HTTPS Protocols" value="TLSv1, TLSv1.1, TLSv1.2, TLSv1.3" />
        </Fields>
        <CheckList>
          <CheckField id="redirect" label="Web Interface HTTP -> HTTPS Redirect" />
        </CheckList>
      </Section>
      <Section>
        <SectionTitle>Localization</SectionTitle>
        <LocalizationGrid>
          <FieldList $inset={23}>
            <ComboField id="language" label="Language" value="English" />
            <SortRow role="radiogroup" aria-label="Sort languages by">
              <SortCaption>Sort languages by:</SortCaption>
              <RadioLabel>
                <Radio type="radio" name="sort" checked={sort === 'name'} onChange={() => setSort('name')} />
                Name
              </RadioLabel>
              <RadioLabel>
                <Radio type="radio" name="sort" checked={sort === 'code'} onChange={() => setSort('code')} />
                Language code
              </RadioLabel>
            </SortRow>
            <SelectField id="date" label="Date Format" value="2023-04-28" />
          </FieldList>
          <FieldList>
            <SelectField id="keymap" label="Console Keyboard Map" value="Console Keyboard Map" bare />
            <ComboField id="timezone" label="Timezone" value="Africa/Johannesburg" />
            <SelectField id="time" label="Time Format" value="11:29:33 (24 Hours)" />
          </FieldList>
        </LocalizationGrid>
      </Section>
      <Section>
        <SectionTitle>Other Options</SectionTitle>
        <CheckList>
          <CheckField id="crash" label="Crash reporting" />
          <CheckField id="usage" label="Usage collection" />
        </CheckList>
      </Section>
      <Actions>
        <ActionButton type="submit">Save</ActionButton>
        <ActionButton type="button">Save Config</ActionButton>
        <ActionButton type="button">Upload Config</ActionButton>
        <ActionButton type="button">Reset Config</ActionButton>
      </Actions>
    </Card>
  )
}

const ScrollRail = ({ vertical, size, back, forward }) => (
  <ScrollBar $vertical={vertical}>
    <ScrollArrow aria-label="Scroll back"><Outline d={back} size={14} color="#8c8c8e" width={2} /></ScrollArrow>
    <ScrollTrack><ScrollThumb $size={size} /></ScrollTrack>
    <ScrollArrow aria-label="Scroll forward"><Outline d={forward} size={14} color="#8c8c8e" width={2} /></ScrollArrow>
  </ScrollBar>
)

const WindowsBar = () => (
  <TaskBar>
    <TaskGroup>
      <TaskButton $width={48} aria-label="Start"><StartIcon /></TaskButton>
      <TaskButton $width={48} aria-label="Search">
        <Outline d="M6.500 9.500L1 15M15 5.500a4.800 4.800 0 1 1-9.600 0 4.800 4.800 0 0 1 9.600 0z" color="#fff" />
      </TaskButton>
      <TaskButton $width={48} aria-label="Task view"><TaskViewIcon /></TaskButton>
    </TaskGroup>
    {tasks.map((task) => {
      const Button = task.open ? OpenTask : TaskButton;
      return <Button key={task.name} aria-label={task.name}>{task.icon}</Button>
    })}
    <Tray>
      <TaskButton $width={60} aria-label="Weather"><WeatherIcon /></TaskButton>
      <TaskButton $width={26} aria-label="Hidden icons"><Outline d="M3 10.500l5-5 5 5" color="#fff" /></TaskButton>
      <TaskButton $width={24} aria-label="Meet now">
        <Outline d="M3 4.500h7v7H3zM10 7l3.500-1.500v5L10 9M4.500 2q3.500-2 7 0M4.500 14q3.500 2 7 0" color="#fff" />
      </TaskButton>
      <TaskButton $width={24} aria-label="Network">
        <Outline d="M4.500 3.500h11v8h-11zM6 14.500h7M9.500 11.500v3M.5 2h4v4h-4zM2.500 6v8.500" color="#fff" />
      </TaskButton>
      <TaskButton $width={24} aria-label="Volume">
        <Outline d="M1 6v4h2l3.500 3V3L3 6zM8.500 6q1.500 2 0 4M11 4.500q2.500 3.500 0 7M13.500 3q3 5 0 10" color="#fff" />
      </TaskButton>
      <TaskButton $width={32} $lit aria-label="Windows Ink">
        <Outline d="M5.500 10.500L12 2.500q1.500-1 2 .5L8 10.500l-2.500 1.500zM5.500 8.500C2 8.500 1 11 1.500 12.500c.7 2 3.500 2 4.500 0M9 12c1.500-2 2.500-3 3-2.500s-1 2.500 0 3 2-1 3.500-3" color="#fff" />
      </TaskButton>
      <TrayText $width={35}>ENG</TrayText>
      <TrayText $width={73}>
        <span>11:30</span>
        <span>2023/04/28</span>
      </TrayText>
      <TaskButton $width={41} aria-label="Notifications"><NoticeIcon /></TaskButton>
      <ShowDesktop />
    </Tray>
  </TaskBar>
)

export default function App() {
  return (
    <Desktop>
      <GlobalStyle />
      <Browser />
      <AppShell>
        <TopBar />
        <Body>
          <SideMenu />
          <Main>
            <Breadcrumb>
              <a href="#system">System</a>
              <Slash>/</Slash>
              <a href="#general">General</a>
              <Copyright>TrueNAS CORE® © 2023 - <a href="#ix">iXsystems, Inc</a>.</Copyright>
            </Breadcrumb>
            <ScrollArea>
              <Page><GeneralForm /></Page>
              <ScrollRail vertical size={97.6} back="M3 10.500l5-5 5 5" forward="M3 5.500l5 5 5-5" />
              <ScrollRail size={99.4} back="M10.500 3l-5 5 5 5" forward="M5.500 3l5 5-5 5" />
            </ScrollArea>
          </Main>
        </Body>
      </AppShell>
      <WindowsBar />
    </Desktop>
  )
}
